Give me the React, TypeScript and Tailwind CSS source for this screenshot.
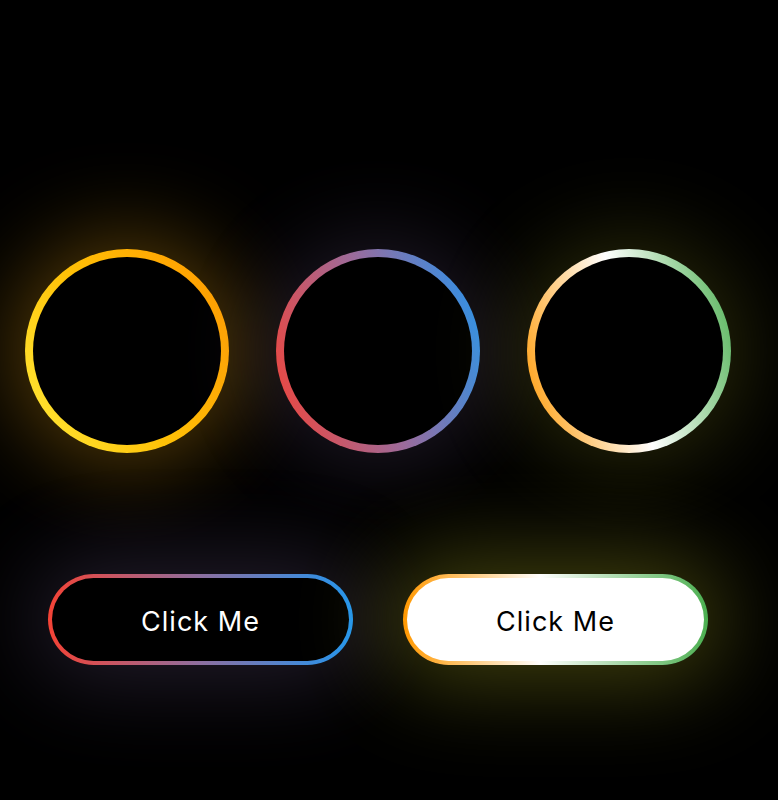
import React from 'react';

const Ring: React.FC<{ ring: string; glow: string }> = ({ ring, glow }) => (
  <div className={`w-[204px] h-[204px] rounded-full p-[8px] ${ring} ${glow}`}>
    <div className="w-full h-full rounded-full bg-black" />
  </div>
);

const GlowButton: React.FC<{ ring: string; glow: string; inner: string }> = ({ ring, glow, inner }) => (
  <div className={`w-[305px] h-[91px] rounded-full p-[4px] ${ring} ${glow}`}>
    <button
      className={`w-full h-full rounded-full flex items-center justify-center pt-[5px] text-[27px] tracking-[1px] font-['Inter',sans-serif] ${inner}`}
    >
      Click Me
    </button>
  </div>
);

export default function App() {
  return (
    <div className="min-h-[800px] w-full bg-black flex flex-col items-center pt-[249px] pr-[22px]">
      <div className="flex gap-[47px]">
        <Ring
          ring="bg-[linear-gradient(60deg,#ffeb3b,#ffc107_45%,#ff9800)]"
          glow="shadow-[0_0_90px_12px_rgba(255,180,20,0.34)]"
        />
        <Ring
          ring="bg-[linear-gradient(75deg,#f44336,#9c6b9b_50%,#2196f3)]"
          glow="shadow-[0_0_90px_10px_rgba(160,130,200,0.2)]"
        />
        <Ring
          ring="bg-[linear-gradient(76deg,#ff9800,#fff_50%,#4caf50)]"
          glow="shadow-[0_0_90px_10px_rgba(200,200,40,0.22)]"
        />
      </div>
      <div className="flex gap-[50px] mt-[121px]">
        <GlowButton
          ring="bg-[linear-gradient(90deg,#f44336,#8d6fa0_50%,#2196f3)]"
          glow="shadow-[0_0_90px_15px_rgba(160,130,200,0.22)]"
          inner="bg-black text-white"
        />
        <GlowButton
          ring="bg-[linear-gradient(90deg,#ff9800,#fff_45%,#4caf50)]"
          glow="shadow-[0_0_90px_18px_rgba(200,200,40,0.32)]"
          inner="bg-white text-black"
        />
      </div>
    </div>
  );
}
